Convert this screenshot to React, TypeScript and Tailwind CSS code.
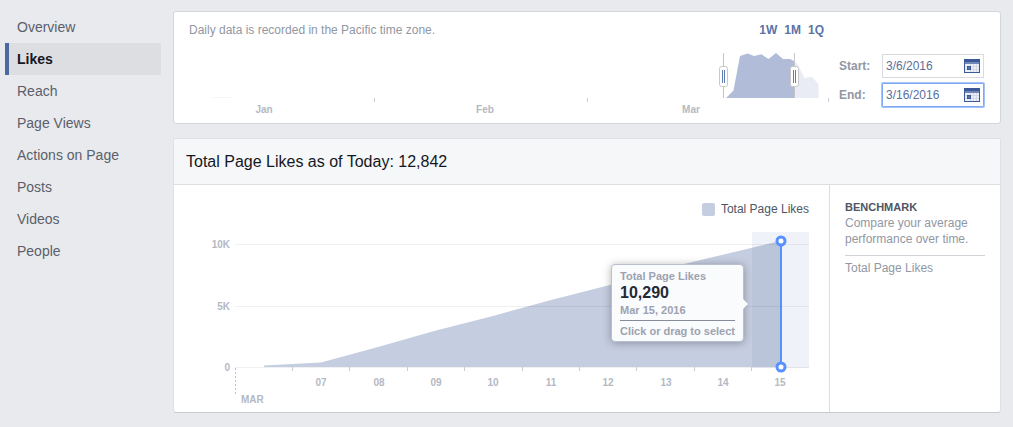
import { useState } from "react";
import clsx from "clsx";

const sections = ["Overview", "Likes", "Reach", "Page Views", "Actions on Page", "Posts", "Videos", "People"];

const dayTicks = [103, 160, 218, 275, 333, 390, 447, 505, 562];

const dayLabels = [
  { label: "07", x: 132 },
  { label: "08", x: 190 },
  { label: "09", x: 247 },
  { label: "10", x: 304 },
  { label: "11", x: 362 },
  { label: "12", x: 419 },
  { label: "13", x: 477 },
  { label: "14", x: 534 },
  { label: "15", x: 591 },
];

const gridRows = [
  { label: "10K", y: 27 },
  { label: "5K", y: 89 },
  { label: "0", y: 150 },
];

const months = [
  { label: "Jan", x: 75 },
  { label: "Feb", x: 296 },
  { label: "Mar", x: 502 },
];

/** Page insights, likes section. */
export default function App() {
  const [active, setActive] = useState("Likes");

  return (
    <div className="flex min-h-screen items-start bg-[#e9eaed] pt-[11px] pr-3 pb-[14px] pl-[5px] font-['Liberation_Sans',Arial,sans-serif] text-xs">
      <nav className="w-[156px] shrink-0">
        {sections.map((name) => (
          <a
            key={name}
            href="#"
            onClick={() => setActive(name)}
            className={clsx(
              "block border-l-4 pl-2 text-sm leading-8",
              active === name ? "border-[#4e69a2] bg-[#dddee2] font-bold text-[#141823]" : "border-transparent text-[#5a5f6b]"
            )}
          >
            {name}
          </a>
        ))}
      </nav>
      <main className="ml-3 flex min-w-0 flex-1 flex-col gap-[14px]">
        <DateRangeCard />
        <LikesCard />
      </main>
    </div>
  );
}

function DateRangeCard() {
  return (
    <section className="flex rounded-[3px] border border-[#d3d6db] bg-white pr-4 pl-[15px]">
      <div className="min-w-0 flex-1 pt-[10px] pb-[7px]">
        <div className="flex justify-between pr-[5px] leading-4">
          <p className="text-[#9197a3]">Daily data is recorded in the Pacific time zone.</p>
          <div className="flex gap-[7px] font-bold text-[#5b74a8]">
            <button type="button">1W</button>
            <button type="button">1M</button>
            <button type="button">1Q</button>
          </div>
        </div>
        <RangeChart />
      </div>
      <form className="flex shrink-0 flex-col gap-[5px] pt-[42px] pl-[10px]">
        <DateField id="start" label="Start:" initial="3/6/2016" />
        <DateField id="end" label="End:" initial="3/16/2016" selected />
      </form>
    </section>
  );
}

function DateField({ id, label, initial, selected = false }: { id: string; label: string; initial: string; selected?: boolean }) {
  const [value, setValue] = useState(initial);
  return (
    <div className="flex items-center">
      <label htmlFor={id} className="w-[43px] font-bold text-[#9197a3]">
        {label}
      </label>
      <div
        className={clsx(
          "flex h-6 w-[102px] items-center border bg-white px-[3px]",
          selected ? "rounded-[1px] border-[#7fa9f5] ring-1 ring-[#a6c4fa]" : "border-[#d8dae0]"
        )}
      >
        <input
          id={id}
          type="text"
          value={value}
          onChange={(e) => setValue(e.target.value)}
          className="min-w-0 flex-1 bg-transparent text-xs text-[#5b6f9c] outline-none"
        />
        <button type="button" aria-label="Open calendar">
          <CalendarIcon />
        </button>
      </div>
    </div>
  );
}

function CalendarIcon() {
  return (
    <svg width="16" height="14" viewBox="0 0 16 14" className="block" shapeRendering="crispEdges">
      <rect width="16" height="14" fill="#3b5998" />
      <rect x="1" y="3" width="14" height="2" fill="#7187b7" />
      <rect x="1" y="5" width="14" height="8" fill="#eceff5" />
      <path d="M1 7h14v1H1zM1 10h14v1H1zM6 5h1v8H6zM9 5h1v8H9zM12 5h1v8h-1z" fill="#d5dae6" />
      <rect x="3" y="7" width="4" height="4" fill="#3b5998" />
      <rect x="4" y="8" width="2" height="2" fill="#5b74a8" />
    </svg>
  );
}

function RangeChart() {
  return (
    <svg viewBox="0 0 640 78" className="block w-full" role="img" aria-label="Selected date range">
      <path d="M24 59.5H42" stroke="#f3f4f7" />
      <path d="M605 60V23L608.5 26L615.5 40L623 39L629.5 46V60Z" fill="#e9ecf5" />
      <path d="M537 60L544.5 52.5L551 18L558.5 15.5L565 18L572.5 16.3L579.5 21L587 15L594 21H601L605 23V60Z" fill="#b0bcd8" />
      <path d="M185.5 60V64M398.5 60V64M639.5 60V64" stroke="#c9ccd2" />
      <RangeHandle x={534} />
      <RangeHandle x={605} />
      {months.map(({ label, x }) => (
        <text key={label} x={x} y="75" textAnchor="middle" className="fill-[#b4b9c4] text-[10px] font-bold">
          {label}
        </text>
      ))}
    </svg>
  );
}

function RangeHandle({ x }: { x: number }) {
  return (
    <g transform={`translate(${x} 0)`}>
      <path d="M.5 15V60" stroke="#c5c5c5" />
      <rect x="-3.5" y="28.5" width="8" height="20" rx="2" fill="#fff" stroke="#c8c8c8" />
      <path d="M-.5 32V45M1.5 32V45" stroke="#5b7cb0" />
    </g>
  );
}

function LikesCard() {
  return (
    <section className="rounded-[3px] border border-[#dfe0e4] border-b-[#c9ccd1] bg-white">
      <header className="rounded-t-[3px] border-b border-[#dcdee2] bg-[#f6f7f9] px-3 py-[11px]">
        <h2 className="text-base leading-[23px] text-[#141823]">Total Page Likes as of Today: 12,842</h2>
      </header>
      <div className="flex">
        <div className="min-w-0 flex-1 pt-4 pr-5 pb-[7px] pl-[15px]">
          <div className="flex items-center justify-end gap-[6px] leading-4 text-[#4e5665]">
            <span className="h-[13px] w-[13px] rounded-[2px] bg-[#c5cde0]" />
            Total Page Likes
          </div>
          <div className="relative">
            <LikesChart />
            <ChartTooltip />
          </div>
        </div>
        <aside className="w-[171px] shrink-0 border-l border-[#dcdee2] px-[15px] pt-[15px] leading-4 text-[#9197a3]">
          <h3 className="text-[11px] leading-[15px] font-bold text-[#4e5665]">BENCHMARK</h3>
          <p>Compare your average performance over time.</p>
          <a href="#" className="mt-2 block border-t border-[#d0d3d8] pt-1">
            Total Page Likes
          </a>
        </aside>
      </div>
    </section>
  );
}

function LikesChart() {
  return (
    <svg viewBox="0 0 620 188" className="block w-full" role="img" aria-label="Total page likes by day">
      <rect x="563" y="15" width="57" height="136" fill="#eff2f8" />
      <path d="M75 150V148.5L132 145.5L189 130L247 113.5L304 99L362 83L419 68.5L476 51.5L562 31L591.5 24V150Z" fill="#c5cde0" />
      <path d="M563 31L591.5 24V150H563Z" fill="#bac5d9" />
      {gridRows.map(({ label, y }) => (
        <g key={label}>
          <path d={`M46 ${y + 0.5}H620`} stroke="#000" strokeOpacity=".06" />
          <text x="41" y={y + 4} textAnchor="end" className="fill-[#b4b9c4] text-[10px] font-bold">
            {label}
          </text>
        </g>
      ))}
      {dayTicks.map((x) => (
        <path key={x} d={`M${x + 0.5} 150V154`} stroke="#c9ccd2" />
      ))}
      {dayLabels.map(({ label, x }) => (
        <text key={label} x={x} y="169" textAnchor="middle" className="fill-[#b4b9c4] text-[10px] font-bold">
          {label}
        </text>
      ))}
      <path d="M46.5 151V178" stroke="#c0c3c9" strokeDasharray="2 2" />
      <text x="52" y="186" className="fill-[#b4b9c4] text-[10px] font-bold">
        MAR
      </text>
      <path d="M592 24V150" stroke="#5890ff" strokeWidth="2" />
      <circle cx="592" cy="24" r="4" fill="#fff" stroke="#5890ff" strokeWidth="3" />
      <circle cx="592" cy="150" r="4" fill="#fff" stroke="#5890ff" strokeWidth="3" />
    </svg>
  );
}

function ChartTooltip() {
  return (
    <div className="absolute top-[47px] right-[65px] rounded-[4px] border border-[#b9bfcf] bg-[#fafbfd] px-2 pt-[3px] pb-[2px] text-[11px] leading-4 font-bold whitespace-nowrap text-[#9da2b0] shadow-[0_1px_8px_rgba(0,0,0,0.3)]">
      <p>Total Page Likes</p>
      <p className="text-base leading-[17px] text-[#232937]">10,290</p>
      <p className="leading-[18px]">Mar 15, 2016</p>
      <p className="mt-[1px] border-t border-[#868b9b] pt-[2px]">Click or drag to select</p>
      <svg width="5" height="10" viewBox="0 0 5 10" className="absolute top-[34px] -right-[5px]">
        <path d="M0 0L5 5L0 10Z" fill="#fafbfd" />
      </svg>
    </div>
  );
}
